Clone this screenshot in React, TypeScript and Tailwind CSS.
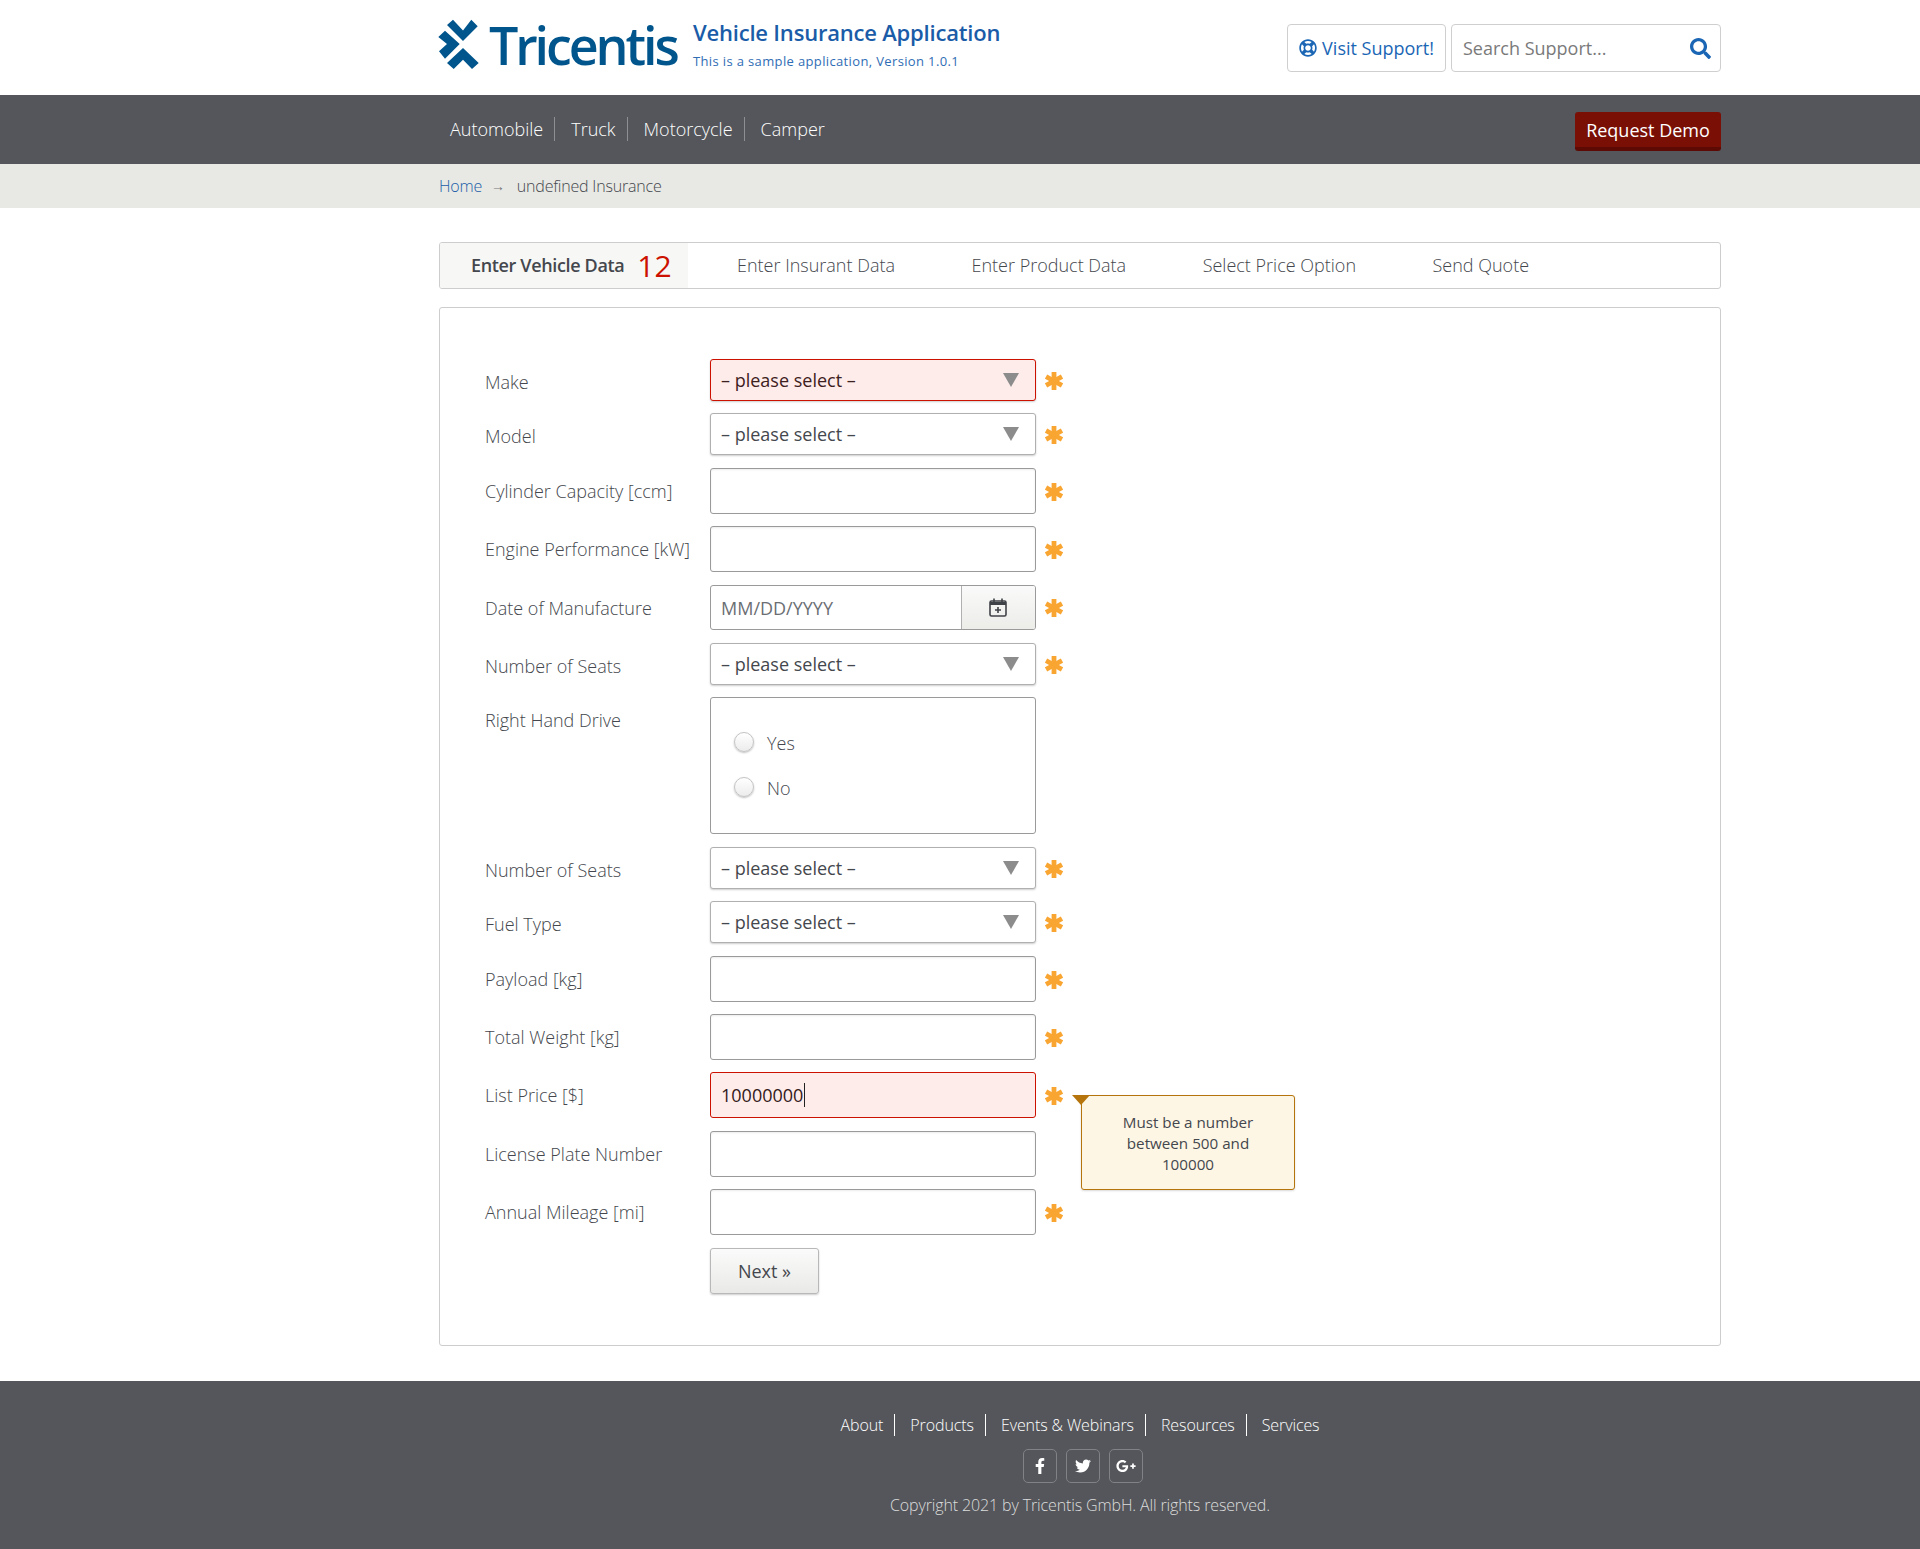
import React from "react";
import { FaFacebookF, FaGooglePlusG, FaRegLifeRing, FaSearch, FaTwitter } from "react-icons/fa";

const FONT = "font-['Open_Sans',sans-serif]";

const mainNav = ["Automobile", "Truck", "Motorcycle", "Camper"];
const footerNav = ["About", "Products", "Events & Webinars", "Resources", "Services"];
const steps = [
  { label: "Enter Insurant Data", className: "ml-[49px]" },
  { label: "Enter Product Data", className: "ml-[76.5px]" },
  { label: "Select Price Option", className: "ml-[76.5px]" },
  { label: "Send Quote", className: "ml-[76.5px]" },
];

function Asterisk() {
  return (
    <svg width="18" height="18" viewBox="0 0 18 18" className="mt-px shrink-0">
      <g stroke="#f9a532" strokeWidth="4.8">
        <path d="M9 0V18" />
        <path d="M1 4.6L17 13.4" />
        <path d="M17 4.6L1 13.4" />
      </g>
    </svg>
  );
}

function SelectBox({ error }: { error?: boolean }) {
  return (
    <div
      className={`relative h-[42px] w-[326px] rounded-[3px] border px-[10px] text-[18px] leading-[40px] shadow-[0_1px_2px_rgba(0,0,0,0.2)] ${
        error ? "border-[#cc1100] bg-[#feeceb] text-[#3d2020]" : "border-[#b0b0b0] bg-white text-[#44474d]"
      }`}
    >
      – please select –
      <svg width="16" height="14" viewBox="0 0 16 14" className="absolute right-[16px] top-[13px]">
        <path d="M0 0H16L8 14Z" fill="#8c8c8c" />
      </svg>
    </div>
  );
}

function TextBox({ value, error }: { value?: string; error?: boolean }) {
  return (
    <div
      className={`flex h-[46px] w-[326px] items-center rounded-[3px] border px-[10px] text-[18px] ${
        error
          ? "border-[#cc1100] bg-[#feeceb] text-[#331a1a]"
          : "border-[#9a9a9a] bg-white shadow-[inset_0_1px_2px_rgba(0,0,0,0.08)]"
      }`}
    >
      {value}
      {value && <span className="ml-px h-[24px] w-px bg-[#222]" />}
    </div>
  );
}

function Field({
  label,
  required = true,
  className = "",
  labelClass = "",
  children,
}: {
  label: string;
  required?: boolean;
  className?: string;
  labelClass?: string;
  children: React.ReactNode;
}) {
  return (
    <div className={`flex items-center ${className}`}>
      <div className={`w-[270px] shrink-0 whitespace-nowrap pl-[45px] text-[18px] font-light text-[#44474d] ${labelClass}`}>
        {label}
      </div>
      {children}
      <div className="ml-[9px] w-[18px]">{required && <Asterisk />}</div>
    </div>
  );
}

function RadioOption({ label, className = "" }: { label: string; className?: string }) {
  return (
    <div className={`flex h-[20px] items-center ${className}`}>
      <span className="h-[20px] w-[20px] rounded-full border border-[#c4c4c4] bg-gradient-to-b from-white to-[#ececec] shadow-[0_1px_2px_rgba(0,0,0,0.25)]" />
      <span className="ml-[13px] mt-[2px] text-[18px] font-light text-[#44474d]">{label}</span>
    </div>
  );
}

export default function App() {
  return (
    <div className={`${FONT} min-h-[1549px] bg-white text-[#44474d]`}>
      <header className="h-[95px]">
        <div className="ml-[439px] flex h-full w-[1282px] items-start">
          <svg width="44" height="52" viewBox="0 0 44 52" className="ml-[-2px] mt-[18px] shrink-0">
            <g fill="#00558c">
              <path d="M10 7L16 1.7L26 12.5L34.3 1.7L40.7 8.3L26 23Z" />
              <path d="M1.3 19L8 12.7L22.7 26L8 40.7L2 33.3L10 26Z" />
              <path d="M26 30L41.7 45L35 51L26 41.7L16.7 51L10 45Z" />
            </g>
          </svg>
          <div className="ml-[8px] mt-[14px] w-[188px] whitespace-nowrap text-[52px] font-semibold leading-[62px] tracking-[-3.1px] text-[#00558c]">
            Tricentis
          </div>
          <div className="ml-[16px] mt-[17px]">
            <div className="text-[22px] font-semibold leading-[30px] tracking-[-0.2px] text-[#1a5ca8]">
              Vehicle Insurance Application
            </div>
            <div className="mt-[5px] text-[13px] leading-[18px] tracking-[0.36px] text-[#2f6db5]">
              This is a sample application, Version 1.0.1
            </div>
          </div>
          <div className="ml-auto mt-[24px] flex gap-[5px]">
            <div className="flex h-[48px] w-[159px] items-center justify-center gap-[5px] rounded-[4px] border border-[#cfcfcf] text-[18px] text-[#1a66b5]">
              <FaRegLifeRing className="text-[18px]" />
              Visit Support!
            </div>
            <div className="flex h-[48px] w-[270px] items-center justify-between rounded-[4px] border border-[#cfcfcf] pl-[11px] pr-[9px] text-[18px] text-[#7a7a7a]">
              Search Support...
              <FaSearch className="text-[21px] text-[#1a66b5]" />
            </div>
          </div>
        </div>
      </header>

      <nav className="h-[69px] bg-[#54565b]">
        <div className="ml-[439px] flex h-full w-[1282px] items-start justify-between">
          <ul className="mt-[22px] flex">
            {mainNav.map((item, i) => (
              <li
                key={item}
                className={`flex h-[24px] items-center text-[18px] font-light text-white ${
                  i === 0 ? "pl-[11px]" : "pl-[16px]"
                } ${i < mainNav.length - 1 ? "border-r border-[#8d8f93] pr-[11px]" : ""}`}
              >
                {item}
              </li>
            ))}
          </ul>
          <div className="mt-[17px] flex h-[39px] w-[146px] items-center justify-center rounded-[3px] border-b-[4px] border-[#5c0a03] bg-[#7a1005] pt-[2px] text-[18px] text-white">
            Request Demo
          </div>
        </div>
      </nav>

      <div className="h-[44px] bg-[#e8e9e4] pb-px">
        <div className="ml-[439px] flex h-full items-center text-[16px] font-light tracking-[-0.2px]">
          <span className="text-[#1a5ca8]">Home</span>
          <span className="ml-[9px] text-[14px] font-normal text-[#777]">→</span>
          <span className="ml-[12px] text-[#44474d]">undefined Insurance</span>
        </div>
      </div>

      <main className="ml-[439px] w-[1282px] pt-[34px]">
        <div className="flex h-[47px] items-stretch overflow-hidden rounded-[3px] border border-[#cdcdcd]">
          <div className="flex w-[248px] items-center bg-[#f7f7f5] pl-[31px]">
            <span className="text-[18px] font-semibold tracking-[-0.35px] text-[#44474d]">Enter Vehicle Data</span>
            <span className="ml-[13px] text-[30px] font-medium leading-none text-[#cc1100]">12</span>
          </div>
          {steps.map((step) => (
            <div key={step.label} className={`flex items-center text-[18px] font-light text-[#44474d] ${step.className}`}>
              {step.label}
            </div>
          ))}
        </div>

        <section className="relative mt-[18px] h-[1039px] rounded-[3px] border border-[#cdcdcd] pt-[51px]">
          <Field label="Make" labelClass="mt-[5px]">
            <SelectBox error />
          </Field>
          <Field label="Model" className="mt-[12px]" labelClass="mt-[5px]">
            <SelectBox />
          </Field>
          <Field label="Cylinder Capacity [ccm]" className="mt-[13px]">
            <TextBox />
          </Field>
          <Field label="Engine Performance [kW]" className="mt-[12px]">
            <TextBox />
          </Field>
          <Field label="Date of Manufacture" className="mt-[13px]" labelClass="mt-[2px]">
            <div className="flex h-[45px] w-[326px] overflow-hidden rounded-[3px] border border-[#9a9a9a] text-[18px] text-[#6b6e73]">
              <div className="flex flex-1 items-center pl-[10px] pt-[2px]">MM/DD/YYYY</div>
              <div className="flex w-[74px] items-center justify-center border-l border-[#b0b0b0] bg-gradient-to-b from-[#fafafa] to-[#ecece9]">
                <svg width="18" height="19" viewBox="0 0 18 19" fill="none" stroke="#3f4247" className="ml-[-2px]">
                  <rect x="1" y="3" width="16" height="15" rx="1.5" strokeWidth="1.6" />
                  <path d="M1 5.5H17" strokeWidth="3" />
                  <path d="M5 0.5V4M13 0.5V4" strokeWidth="1.6" />
                  <path d="M9 9V15M6 12H12" strokeWidth="1.6" />
                </svg>
              </div>
            </div>
          </Field>
          <Field label="Number of Seats" className="mt-[13px]" labelClass="mt-[5px]">
            <SelectBox />
          </Field>
          <Field label="Right Hand Drive" required={false} className="mt-[12px] items-start" labelClass="mt-[10px]">
            <div className="h-[137px] w-[326px] rounded-[3px] border border-[#9a9a9a] pl-[23px] pt-[34px]">
              <RadioOption label="Yes" />
              <RadioOption label="No" className="mt-[25px]" />
            </div>
          </Field>
          <Field label="Number of Seats" className="mt-[13px]" labelClass="mt-[5px]">
            <SelectBox />
          </Field>
          <Field label="Fuel Type" className="mt-[12px]" labelClass="mt-[5px]">
            <SelectBox />
          </Field>
          <Field label="Payload [kg]" className="mt-[13px]">
            <TextBox />
          </Field>
          <Field label="Total Weight [kg]" className="mt-[12px]">
            <TextBox />
          </Field>
          <Field label="List Price [$]" className="mt-[12px]">
            <TextBox value="10000000" error />
          </Field>
          <Field label="License Plate Number" required={false} className="mt-[13px]">
            <TextBox />
          </Field>
          <Field label="Annual Mileage [mi]" className="mt-[12px]">
            <TextBox />
          </Field>
          <div className="ml-[270px] mt-[13px] flex h-[46px] w-[109px] items-center justify-center rounded-[3px] border border-[#b8b8b8] bg-gradient-to-b from-[#fbfbfb] to-[#e9e9e7] text-[18px] text-[#44474d] shadow-[0_1px_2px_rgba(0,0,0,0.2)]">
            Next »
          </div>

          <div className="absolute left-[641px] top-[787px] w-[214px] rounded-[3px] border border-[#b5750c] bg-[#fef6e5] px-[20px] pb-[15px] pt-[16px] text-center text-[15.2px] font-medium leading-[20.8px] text-[#44474d] shadow-[0_1px_2px_rgba(0,0,0,0.15)]">
            Must be a number between 500 and 100000
            <span className="absolute left-[-10px] top-[-1px] h-0 w-0 border-x-[9px] border-t-[10px] border-x-transparent border-t-[#b5750c]" />
          </div>
        </section>
      </main>

      <footer className="mt-[35px] h-[168px] bg-[#54565b] pl-[240px] pt-[33px] text-white">
        <ul className="flex justify-center tracking-[-0.1px]">
          {footerNav.map((item, i) => (
            <li
              key={item}
              className={`flex h-[22px] items-center text-[16px] font-light ${i > 0 ? "pl-[15px]" : ""} ${
                i < footerNav.length - 1 ? "border-r border-white pr-[11px]" : ""
              }`}
            >
              {item}
            </li>
          ))}
        </ul>
        <div className="ml-[5px] mt-[13px] flex justify-center gap-[9px]">
          {[FaFacebookF, FaTwitter, FaGooglePlusG].map((Icon, i) => (
            <span key={i} className="flex h-[34px] w-[34px] items-center justify-center rounded-[5px] border border-[#808285]">
              <Icon className={i === 2 ? "text-[20px]" : "text-[16px]"} />
            </span>
          ))}
        </div>
        <div className="mt-[10px] text-center text-[16px] font-light tracking-[-0.13px] text-[#dcdcdc]">
          Copyright 2021 by Tricentis GmbH. All rights reserved.
        </div>
      </footer>
    </div>
  );
}
